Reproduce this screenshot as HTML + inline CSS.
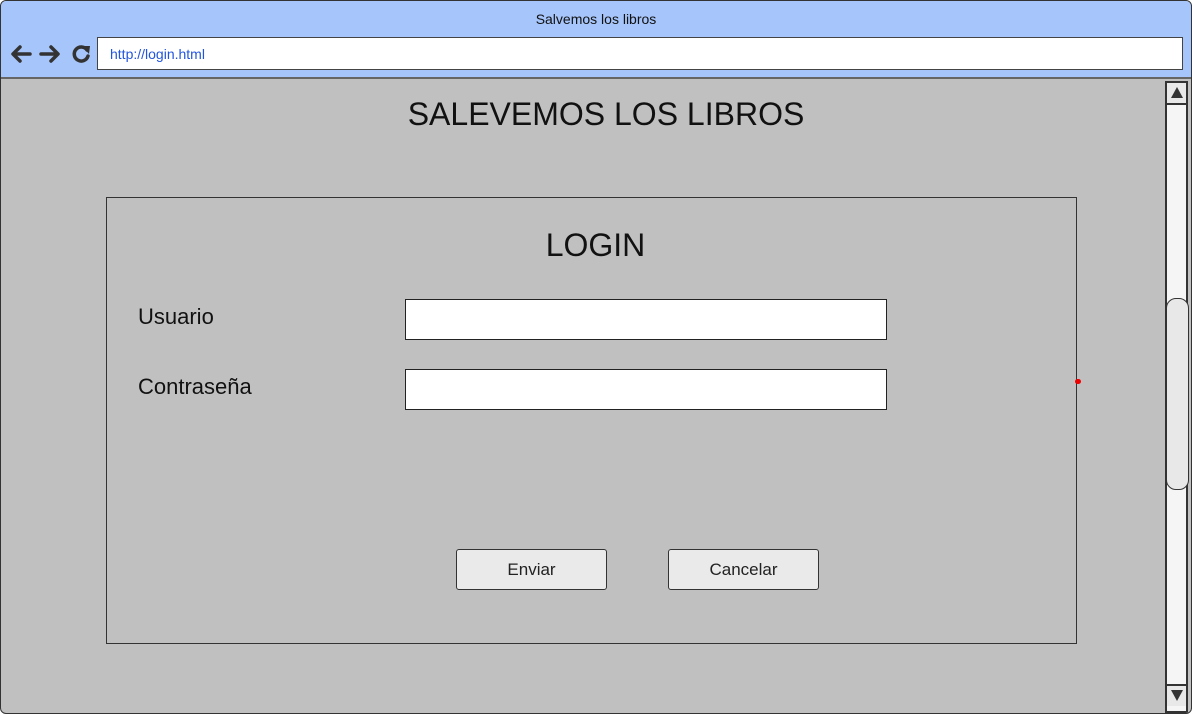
<!DOCTYPE html><html><head><style>
body{margin:0;width:1192px;height:715px;overflow:hidden;font-family:"Liberation Sans",sans-serif;background:#fff}
.win{position:absolute;left:0;top:0;width:1190px;height:712px;border:1px solid #333;border-radius:6px;background:#c0c0c0;overflow:hidden}
.bar{position:absolute;left:0;top:0;width:1190px;height:76px;background:#a6c5fa;border-bottom:2px solid #666}
.t{position:absolute;top:10px;width:100%;text-align:center;font-size:14px;color:#111}
.url{position:absolute;left:96px;top:36px;width:1086px;height:33px;background:#fff;border:1px solid #444;box-sizing:border-box;font-size:14px;color:#2255dd;line-height:33px;padding-left:12px}
.abs{position:absolute}
.in{position:absolute;background:#fff;border:1px solid #222;box-sizing:border-box}
.btn{position:absolute;width:151px;height:41px;background:#eaeaea;border:1px solid #333;border-radius:3px;box-sizing:border-box;text-align:center;line-height:39px;font-size:17px;color:#222}
</style></head><body><div class="win">
<div class="bar"><div class="t">Salvemos los libros</div>
<svg class="abs" style="left:8px;top:41px" width="86" height="24" viewBox="0 0 86 24"><g fill="none" stroke="#333" stroke-width="3.5" stroke-linecap="round" stroke-linejoin="round"><path d="M21 12H5M11 5l-7 7 7 7"/><path d="M32 12h16M42 5l7 7-7 7"/><path d="M78 8a7 7 0 1 0 1 6"/></g><path d="M73 4l8 0-1 8z" fill="#333"/></svg>
<div class="url">http://login.html</div></div>
<div class="abs" style="left:0;top:95px;width:1210px;text-align:center;font-size:32px;color:#111">SALEVEMOS LOS LIBROS</div>
<div class="abs" style="left:1164px;top:80px;width:23px;height:632px;background:#f5f5f5;border:2px solid #333;box-sizing:border-box"></div>
<div class="abs" style="left:1166px;top:82px;width:19px;height:20px;background:#e8e8e8;border-bottom:2px solid #333"></div>
<div class="abs" style="left:1170px;top:86px;width:0;height:0;border-left:6px solid transparent;border-right:6px solid transparent;border-bottom:11px solid #333"></div>
<div class="abs" style="left:1166px;top:683px;width:19px;height:20px;background:#e8e8e8;border-top:2px solid #333"></div>
<div class="abs" style="left:1170px;top:689px;width:0;height:0;border-left:6px solid transparent;border-right:6px solid transparent;border-top:11px solid #333"></div>
<div class="abs" style="left:1165px;top:297px;width:23px;height:192px;background:#e8e8e8;border:1px solid #333;border-radius:10px;box-sizing:border-box"></div>
<div class="abs" style="left:105px;top:196px;width:971px;height:447px;border:1px solid #333;box-sizing:border-box"></div>
<div class="abs" style="left:109px;top:226px;width:971px;text-align:center;font-size:32px;color:#111">LOGIN</div>
<div class="abs" style="left:137px;top:303px;font-size:22px;color:#111">Usuario</div>
<div class="abs" style="left:137px;top:373px;font-size:22px;color:#111">Contraseña</div>
<div class="in" style="left:404px;top:298px;width:482px;height:41px"></div>
<div class="in" style="left:404px;top:368px;width:482px;height:41px"></div>
<div class="btn" style="left:455px;top:548px">Enviar</div>
<div class="btn" style="left:667px;top:548px">Cancelar</div>
<div class="abs" style="left:1074px;top:378px;width:6px;height:5px;background:#e00;border-radius:3px"></div>
</div></body></html>
